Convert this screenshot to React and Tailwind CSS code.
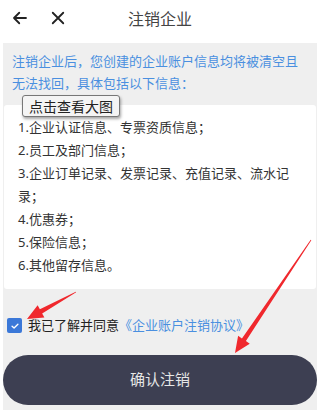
import React from "react";

function Arrow({ x1, y1, x2, y2 }) {
  const dx = x2 - x1, dy = y2 - y1;
  const len = Math.hypot(dx, dy);
  const ux = dx / len, uy = dy / len;
  const px = -uy, py = ux;
  const headLen = 16, headW = 7, shaftW = 2.4;
  const bx = x2 - ux * headLen, by = y2 - uy * headLen;
  const pts = [
    [x1 + px * 0.4, y1 + py * 0.4],
    [bx + px * shaftW, by + py * shaftW],
    [bx + px * headW, by + py * headW],
    [x2, y2],
    [bx - px * headW, by - py * headW],
    [bx - px * shaftW, by - py * shaftW],
    [x1 - px * 0.4, y1 - py * 0.4],
  ];
  return <polygon points={pts.map((p) => p.join(",")).join(" ")} fill="#f0282d" />;
}

export default function App() {
  const items = [
    "1.企业认证信息、专票资质信息；",
    "2.员工及部门信息；",
    "3.企业订单记录、发票记录、充值记录、流水记录；",
    "4.优惠券；",
    "5.保险信息；",
    "6.其他留存信息。",
  ];
  return (
    <div
      className="relative w-[320px] h-[410px] overflow-hidden bg-white"
      style={{ fontFamily: '"Noto Sans", "Noto Sans CJK SC", sans-serif' }}
    >
      <div className="h-[43px] flex items-center relative">
        <svg className="absolute left-[11px] top-[9px]" width="18" height="18" viewBox="0 0 24 24" fill="none" stroke="#222" strokeWidth="2.4" strokeLinecap="round" strokeLinejoin="round">
          <path d="M20 12H4M11 5l-7 7 7 7" />
        </svg>
        <svg className="absolute left-[49px] top-[9px]" width="18" height="18" viewBox="0 0 24 24" fill="none" stroke="#222" strokeWidth="2.4" strokeLinecap="round">
          <path d="M5 5l14 14M19 5L5 19" />
        </svg>
        <div className="w-full text-center text-[16px] text-[#444] -mt-[6px]">注销企业</div>
      </div>
      <div className="mx-[3px] bg-[#efefef] h-[367px] flex flex-col">
        <div className="px-[9px] pt-[7px] text-[13px] leading-[22px] text-[#4a8fe0]">
          注销企业后，您创建的企业账户信息均将被清空且无法找回，具体包括以下信息：
        </div>
        <div className="relative mt-[11px] mx-[1px] bg-white rounded-[3px] px-[14px] pt-[11px] pb-[12px] text-[13px] leading-[23px] text-[#333]">
          {items.map((t) => (
            <div key={t}>{t}</div>
          ))}
          <div className="absolute left-[18px] -top-[10px] border border-[#777] rounded-[3px] bg-[#f4f4f4] px-[6px] h-[22px] flex items-center text-[14px] text-[#222] shadow-[1px_2px_3px_rgba(0,0,0,0.35)]">
            点击查看大图
          </div>
        </div>
        <div className="mt-[27px] flex items-center pl-[4px] text-[13px]">
          <div className="w-[15px] h-[15px] rounded-[2px] bg-[#3b78d8] flex items-center justify-center">
            <svg width="10" height="10" viewBox="0 0 12 12" fill="none" stroke="white" strokeWidth="1.6" strokeLinecap="round" strokeLinejoin="round">
              <path d="M2.5 6.2l2.4 2.3L9.5 3.8" />
            </svg>
          </div>
          <span className="ml-[6px] text-[#222]">我已了解并同意</span>
          <span className="text-[#4a8fe0]">《企业账户注销协议》</span>
        </div>
        <button className="mt-[19px] h-[50px] w-full rounded-full bg-[#3d3f52] text-[#e6e6e6] text-[15px]">
          确认注销
        </button>
      </div>
      <svg className="absolute left-0 top-0 pointer-events-none" width="320" height="410">
        <Arrow x1={76} y1={292} x2={27} y2={319} />
        <Arrow x1={311} y1={240} x2={235} y2={353} />
      </svg>
    </div>
  );
}
